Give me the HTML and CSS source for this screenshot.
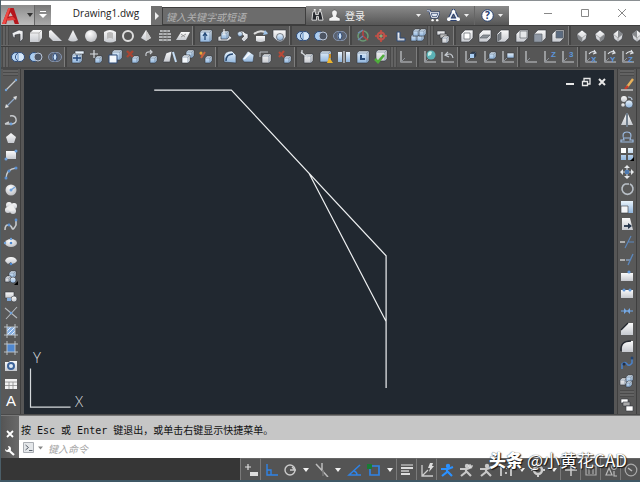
FILE: index.html
```html
<!DOCTYPE html>
<html lang="zh-CN">
<head>
    <meta charset="UTF-8">
    <meta name="viewport" content="width=device-width, initial-scale=1.0">
    <title>Drawing1.dwg</title>
    <link rel="stylesheet" href="styles.css">
</head>
<body>
    <svg class="defs" width="0" height="0" aria-hidden="true">
        <linearGradient id="light" x1="0" y1="0" x2="0" y2="1">
            <stop offset="0" stop-color="#fafafa"/><stop offset="1" stop-color="#c6c9cf"/>
        </linearGradient>
        <linearGradient id="blue" x1="0" y1="0" x2="0" y2="1">
            <stop offset="0" stop-color="#eaf4fc"/><stop offset="1" stop-color="#8fb4dc"/>
        </linearGradient>
        <radialGradient id="ball" cx="0.4" cy="0.3" r="0.8">
            <stop offset="0" stop-color="#fff"/><stop offset="1" stop-color="#b5b7bc"/>
        </radialGradient>
    </svg>

    <div class="app">
        <header class="titlebar">
            <button class="app-menu" aria-label="应用程序菜单">
                <svg class="logo" viewBox="0 0 16 16">
                    <path d="M0 16 6 1h5l5 15h-4l-1.500-4.500H5L4 16z" fill="#b5161c"/>
                    <path d="M6 1h2L3 16H0z" fill="#ee4a45"/>
                    <path d="M4 11l6-2 3 3-8 1z" fill="#e2403c"/>
                    <path d="M8 5 6 9l4-.5z" fill="#c9bcbc"/>
                </svg>
                <svg class="caret" viewBox="0 0 6 4"><path d="M0 0h6L3 4z" fill="#333"/></svg>
            </button>
            <button class="quick" aria-label="自定义快速访问工具栏">
                <svg viewBox="0 0 8 8"><path d="M1 0h6v1H1zM0 3h8L4 7z" fill="#fff"/></svg>
            </button>
            <h1 class="doc-name">Drawing1.dwg</h1>
            <button class="expand" aria-label="展开">
                <svg viewBox="0 0 4 8"><path d="M0 0l4 4-4 4z" fill="#eee"/></svg>
            </button>
            <input class="search" type="text" placeholder="键入关键字或短语" aria-label="搜索">
            <div class="infobar">
                <button aria-label="查找">
                    <svg viewBox="0 0 14 14"><path d="M2 3h3v3h3V3h3l2 9H8V8H6v4H1z" fill="#25282d" stroke="#e4e4e4"/><path d="M3 1h2M9 1h2" stroke="#eee" stroke-width="2"/></svg>
                </button>
                <button class="login">
                    <svg viewBox="0 0 14 14"><path d="M4 4a3 3 0 0 1 6 0c0 2-1 3-1 4l4 2v3H1v-3l4-2C5 7 4 6 4 4z" fill="#f4f4f4" stroke="#444" stroke-width=".6"/></svg>
                    <span>登录</span>
                    <svg class="small-caret" viewBox="0 0 5 3"><path d="M0 0h5L2.500 3z" fill="#eee"/></svg>
                </button>
                <button aria-label="应用商店">
                    <svg viewBox="0 0 14 14"><path d="M0 2h3l2 7h6l2-5H4" fill="#dfe6f2" stroke="#273c68" stroke-width="2.400"/><path d="M0 2h3l2 7h6l2-5H4" fill="none" stroke="#fff"/><circle cx="6" cy="12" r="1.300" fill="#fff"/><circle cx="11" cy="12" r="1.300" fill="#fff"/></svg>
                </button>
                <button class="with-caret" aria-label="保持连接">
                    <svg viewBox="0 0 14 14"><path d="M7 2 2.500 11h9z" fill="none" stroke="#2c4170" stroke-width="4"/><path d="M7 2 2.500 11h9z" fill="none" stroke="#e8edf5" stroke-width="1.800"/><circle cx="7" cy="3" r="2" fill="#fff"/><circle cx="2" cy="11" r="2" fill="#fff"/><circle cx="12" cy="11" r="2" fill="#fff"/></svg>
                    <svg class="small-caret" viewBox="0 0 5 3"><path d="M0 0h5L2.500 3z" fill="#eee"/></svg>
                </button>
                <button class="with-caret help" aria-label="帮助">
                    <svg viewBox="0 0 14 14"><circle cx="7" cy="7" r="6.200" fill="#fff" stroke="#25406f"/><text x="7" y="11" text-anchor="middle" class="help-mark">?</text></svg>
                    <svg class="small-caret" viewBox="0 0 5 3"><path d="M0 0h5L2.500 3z" fill="#eee"/></svg>
                </button>
            </div>
            <div class="window-buttons">
                <button aria-label="最小化"><svg viewBox="0 0 10 10"><path d="M1 5.500h8" stroke="#888"/></svg></button>
                <button aria-label="最大化"><svg viewBox="0 0 10 10"><path d="M1.500 1.500h7v7h-7z" fill="none" stroke="#888"/></svg></button>
                <button aria-label="关闭"><svg viewBox="0 0 10 10"><path d="M1 1l8 8M9 1L1 9" stroke="#888"/></svg></button>
            </div>
        </header>

        <div class="toolbar modeling" data-tools="grip polysolid box wedge cone sphere cylinder torus pyramid helix plane | extrude presspull sweep revolve loft | union subtract intersect | move3d rotate3d align3d array3d grip cascade | cubeTop cubeBottom cubeLeft cubeRight cubeFront cubeBack | isoSW isoSE isoNE isoNW"></div>
        <div class="toolbar solids" data-tools="grip union subtract intersect | extrudeFace moveFace offsetFace deleteFace rotateFace taperFace copyFace colorFace | filletEdge chamferEdge copyEdge colorEdge | imprint clean separate shell check grip ucs | ucsWorld ucsPrev | ucsFace ucsObject ucsView | ucsOrigin ucsZ ucs3 | rotX rotY rotZ"></div>

        <main class="workspace">
            <div class="toolbar vertical" data-tools="grip line xline pline polygon rect arc circle cloud spline ellipse ellipseArc insert block point hatch gradient region table mtext"></div>
            <section class="canvas">
                <svg class="drawing" viewBox="0 0 589 346" preserveAspectRatio="xMinYMin meet">
                    <path d="M130 20h77l154.500 165.500v132M284.500 103l77 148" fill="none" stroke="#eef0f1" stroke-width="1.200"/>
                    <path d="M6.500 298v38.500h40" fill="none" stroke="#d5d9dc" stroke-width="1.200"/>
                    <text x="13" y="293" text-anchor="middle">Y</text>
                    <text x="55" y="336" text-anchor="middle">X</text>
                </svg>
                <div class="doc-buttons">
                    <button aria-label="最小化图形"><svg viewBox="0 0 10 10"><path d="M1 7h8" stroke="#e8e8e8" stroke-width="2"/></svg></button>
                    <button aria-label="还原图形"><svg viewBox="0 0 10 10"><path d="M3 4V1.500h6V7H7M1.500 4.500h5v4h-5z" fill="none" stroke="#e8e8e8" stroke-width="1.300"/></svg></button>
                    <button aria-label="关闭图形"><svg viewBox="0 0 10 10"><path d="M2 2l6 6M8 2L2 8" stroke="#e8e8e8" stroke-width="2"/></svg></button>
                </div>
            </section>
            <div class="toolbar vertical right" data-tools="grip erase copy mirror offset array move rotate scale stretch trim extend breakPoint break join chamfer fillet blend explode grip order"></div>
        </main>

        <section class="command">
            <div class="command-side">
                <button aria-label="关闭命令行"><svg viewBox="0 0 10 10"><path d="M2 2l6 6M8 2L2 8" stroke="#fff" stroke-width="1.800"/></svg></button>
                <button aria-label="自定义"><svg viewBox="0 0 10 10"><path d="M3 3.500l6 5.500" stroke="#fff" stroke-width="2.200"/><path d="M3 0a3 3 0 1 1-3 3l2 1.500L4 3z" fill="#fff"/></svg></button>
            </div>
            <div class="command-body">
                <p class="history">按 Esc 或 Enter 键退出，或单击右键显示快捷菜单。</p>
                <div class="prompt">
                    <button aria-label="近期使用的命令">
                        <svg viewBox="0 0 20 12"><path d="M.5.500h10v10H.5z" fill="#e4e7ea" stroke="#a9adb3"/><path d="M2.500 3l3 2.500-3 2.500M6 8.500h3.500" fill="none" stroke="#59616c"/><path d="M15 4.500h5l-2.500 3z" fill="#888"/></svg>
                    </button>
                    <input type="text" placeholder="键入命令" aria-label="命令">
                </div>
            </div>
        </section>

        <footer class="statusbar" data-tools="snap ortho polar more iso more otrack osnap more lineweight ducs anno annoAuto annoScale scaleList more gear more plus monitor isolate clock"></footer>
        <div class="watermark"><b>头条</b>@小黄花CAD</div>
    </div>
    <script src="script.js"></script>
</body>
</html>
```
FILE: styles.css
```css
* { box-sizing: border-box; }
body { margin: 0; font-family: "Noto Sans", "Noto Sans CJK SC", sans-serif; font-size: 11px; background: #555; overflow: hidden; }
button { display: flex; align-items: center; justify-content: center; padding: 0; border: 0; background: none; color: inherit; font: inherit; }
svg { display: block; flex: none; }
.defs { position: absolute; }
.app { position: relative; display: flex; flex-direction: column; height: 100vh; border-left: 1px solid #4b5e68; border-bottom: 2px solid #3f5866; overflow: hidden; }

/* title bar */
.titlebar { display: flex; height: 25px; flex: none; background: #fff; border-top: 1px solid #8a8f92; }
.app-menu { width: 34px; margin-top: 4px; gap: 8px; background: linear-gradient(#8c8c8c, #bdbdbd); border-right: 1px solid #666; }
.logo { width: 17px; height: 17px; }
.caret { width: 6px; height: 4px; }
.quick { width: 16px; margin-top: 4px; background: linear-gradient(#777, #aaa); }
.quick svg { width: 8px; height: 8px; }
.doc-name { width: 100px; margin: 0; padding-left: 10px; text-align: center; font: 10px/24px "Open Sans", sans-serif; color: #222; }
.expand { width: 11px; margin-top: 5px; background: #707070; }
.expand svg { width: 4px; height: 8px; }
.search { flex: 1; min-width: 0; margin-top: 6px; padding: 0 3px; border: 1px solid #3e3e3e; background: #6c6c6c; font: italic 10px "Noto Sans CJK SC", sans-serif; color: #ddd; }
.search::placeholder { color: #b2b2b2; opacity: 1; }
.infobar { display: flex; width: 203px; margin-top: 5px; padding-left: 2px; background: linear-gradient(#8a8a8a, #565656); color: #f0f0f0; }
.infobar button { width: 18px; }
.infobar svg { width: 13px; height: 13px; }
.infobar .small-caret { width: 5px; height: 3px; }
.infobar .login { width: 98px; gap: 4px; padding: 0 3px 0 2px; justify-content: flex-start; font-size: 10px; }
.infobar .login .small-caret { margin-left: auto; }
.infobar .with-caret { width: 32px; gap: 4px; }
.infobar .help { width: 35px; border-left: 1px solid #666; }
.help-mark { font: bold 11px "Open Sans", sans-serif; fill: #1d3a70; }
.window-buttons { display: flex; width: 131px; padding-left: 21px; }
.window-buttons button { width: 37px; }
.window-buttons svg { width: 10px; height: 10px; }

/* toolbars */
.toolbar { display: flex; height: 21px; flex: none; padding-left: 1px; background: #565656; border-top: 1px solid #3d3d3d; border-bottom: 1px solid #666; }
.toolbar button { flex: 1 1 18px; min-width: 0; }
.toolbar svg { width: 14px; height: 14px; overflow: visible; }
.toolbar .sep { width: 5px; border-left: 1px solid #7d7d7d; border-right: 2px solid #565656; background: #454545; background-clip: content-box; }
.grip { width: 7px; background: repeating-linear-gradient(90deg, #4a4a4a 0 1px, #626262 1px 3px); }
.modeling { margin-right: -6px; }
.solids { height: 23px; padding-right: 3px; border-bottom: 2px solid #484848; }
.tiny { font: bold 8px "Liberation Sans", sans-serif; fill: #5d96dc; }
.letter { font: 15px "Liberation Sans", sans-serif; fill: #fff; }

/* workspace */
.workspace { display: flex; flex: 1; min-height: 0; background: #565656; border-bottom: 1px solid #4a4a4a; }
.vertical { flex-direction: column; width: 20px; height: auto; padding: 0 0 4px; border: 0; border-right: 1px solid #3f3f3f; background: #595959; }
.vertical .grip { width: auto; height: 7px; margin: 0 2px; background: repeating-linear-gradient(#4a4a4a 0 1px, #626262 1px 3px); }
.vertical button { flex: 1 1 17px; min-height: 0; }
.right { border-left: 1px solid #3f3f3f; margin-right: 3px; padding: 0; width: 20px; }
.canvas { position: relative; flex: 1; min-width: 0; margin: 1px 3px 0; background: #212830; overflow: hidden; }
.drawing { width: 100%; }
.drawing text { font: 300 15px "Open Sans", sans-serif; fill: #d5d9dc; }
.doc-buttons { position: absolute; top: 6px; right: 4px; display: flex; }
.doc-buttons button { width: 16px; height: 12px; }
.doc-buttons svg { width: 10px; height: 10px; }

/* command line */
.command { display: flex; flex: none; border-top: 1px solid #777; }
.command-side { display: flex; flex-direction: column; justify-content: space-between; width: 18px; padding: 12px 0 2px; background: linear-gradient(90deg, #555, #696969); }
.command-side button { height: 11px; }
.command-side svg { width: 10px; height: 10px; }
.command-body { flex: 1; }
.history { margin: 0; padding: 7px 2px 1px; background: #c6c6c6; color: #111; font: 10px/16px "DejaVu Sans Mono", "Noto Sans CJK SC", monospace; }
.prompt { display: flex; align-items: center; height: 18px; padding: 0 4px 2px; background: #fff; }
.prompt svg { width: 20px; height: 12px; }
.prompt input { flex: 1; border: 0; padding: 0 5px; outline: 0; background: none; font: italic 10px "Noto Sans CJK SC", sans-serif; }
.prompt input::placeholder { color: #a4a4a4; opacity: 1; }

/* status bar */
.statusbar { display: flex; justify-content: flex-end; height: 22px; flex: none; background: #363636; }
.statusbar button { width: 20px; background: #545454; border-top: 1px solid #666; }
.statusbar .more { width: 12px; }
.statusbar .edge { border-left: 1px solid #7a7a7a; }
.statusbar svg { width: 14px; height: 14px; }
.watermark { position: absolute; right: 13px; bottom: 9px; color: #fff; font: 17px/22px "Noto Sans CJK SC", sans-serif; text-shadow: 1px 1px 1px #111, 0 0 1px #222; white-space: nowrap; }
.watermark b { margin-right: 4px; font-weight: 900; }
```
FILE: script.js
```js
// small helpers for the shapes that many icons share
const p = (d, fill = 'url(#light)', extra = '') => `<path d="${d}" fill="${fill}" ${extra}/>`;
const s = (d, color = '#dfe3e8', w = 1.2) => `<path d="${d}" fill="none" stroke="${color}" stroke-width="${w}"/>`;
const c = (x, y, r, fill = 'url(#light)', extra = '') => `<circle cx="${x}" cy="${y}" r="${r}" fill="${fill}" ${extra}/>`;
const t = (x, y, text, cls = 'tiny') => `<text x="${x}" y="${y}" class="${cls}">${text}</text>`;
const edge = 'stroke="#34383e" stroke-width="0.6"';
const navy = 'stroke="#2d4a78" stroke-width="1"';
const cube = (x, y, n, fill = 'url(#blue)') =>
    p(`M${x} ${y + 2}l2-2h${n}v${n}l-2 2h-${n}z`, fill, edge) + s(`M${x} ${y + 2}h${n}v${n}M${x + n} ${y + 2}l2-2`, '#5d6e86', 0.6);
const axes = s('M2 1v11h11', '#c5c8cc') + s('M2 12l4-4', '#8b9098', 1);
const view = (face, fill) => p('M1 5l4-4h8v8l-4 4H1z', 'url(#light)', edge) + p(face, fill || '#fff', 'stroke="#60656b" stroke-width="0.7"');
const iso = shade => p('M7 1l5 4-1 5-4 3-4-3-1-5z', 'url(#light)', edge) + p(shade, '#85888c') + s('M2 5l5 4 5-4M7 9v4', '#888', 0.6);
const man = color => c(8, 3, 2.2, color) + s('M1 6h5l2 0 5-2M7 6v3l-5 4M7 8l5 5', color, 2.2);

const icons = {
    polysolid: p('M1 4l7-3 4 1v8l-3 3V5L4 6v3L2 8z', 'url(#light)', edge),
    box: p('M1 4l3-3h9v8l-3 4H1z', 'url(#light)') + s('M1 4h9v9M10 4l3-3', '#aaa', 0.8),
    wedge: p('M1 2l2-1 11 11H5L1 8z'),
    cone: p('M7 1l5 10q-5 3-10 0z'),
    sphere: c(7, 7, 6, 'url(#ball)'),
    cylinder: p('M1 3q6-4 12 0v9q-6 3-12 0z') + p('M4 4q3-2 6 0v6q-3-2-6 0z', '#b9b9b9'),
    torus: c(7, 7, 5, 'none', 'stroke="#ddd" stroke-width="2"'),
    pyramid: p('M7 1l5 8-5 3-5-3z') + p('M7 1v11l5-3z', '#cacaca'),
    helix: s('M2 2h10M1 5h12M1 8h12M1 11h12', '#d0d2d5', 1.7) + s('M5 1v12M9 1v12', '#777', 0.8),
    plane: p('M5 3h9l-4 8H0z') + s('M5 8l5-3M5 5l4 3', '#888', 0.8),
    extrude: cube(1, 1, 10) + s('M6 11V5M4 7l2-3 2 3', '#244978', 1.3),
    presspull: p('M0 8l4-2h7l3 3-4 3H0z', 'url(#light)', edge) + cube(3, 2, 6) + s('M6 6V0', '#eee'),
    sweep: p('M1 4q5-4 8 0l3 1v4l-4 4-3-3 3-3-2-1-3 2z', 'url(#light)', edge) + c(4, 5, 2.5, 'url(#blue)', edge),
    revolve: p('M2 7h9v5q-5 2-9 0z', 'url(#light)') + s('M0 5q6-5 13-1', '#dcdcdc', 2) + p('M11 1l3 4-5 1z', '#9ec2e6'),
    loft: p('M0 1h13v7q-3 5-6 5t-7-5z', 'url(#light)', edge) + c(7, 8, 3.5, 'url(#blue)', edge),
    union: c(5, 7, 4.5, '#b9d6f3', navy) + c(9, 7, 4.5, '#d6e7f8', navy) + s('M7 4v6', '#6f9ccf'),
    subtract: c(5, 7, 4.5, '#aacdf0', navy) + c(9, 7, 4, '#4d5563', 'stroke="#b9c6da"'),
    intersect: c(5, 7, 4.5, '#5a6270', 'stroke="#8494b0"') + c(9, 7, 4.5, '#5a6270', 'stroke="#8494b0"') + p('M7 3q4 4 0 8-4-4 0-8z', '#c9e0f7', navy),
    move3d: c(7, 7, 5, 'none', 'stroke="#6b9b74" stroke-width="1.5"') + s('M7 1v6l5 4', '#b84343', 1.6) + s('M7 7l-5 4M2 4l5-3', '#6d87b4'),
    rotate3d: s('M1 7h12M7 1v12', '#cf4b3d', 1.5) + c(7, 7, 3.5, 'none', 'stroke="#c0524a" stroke-width="2"') + c(7, 7, 1.5, '#7dad7e'),
    align3d: p('M4 3h3v6h5v3H4z', 'url(#light)', navy),
    array3d: cube(0, 5, 5) + cube(6, 5, 5) + cube(2, 0, 5) + cube(8, 0, 5),
    cascade: p('M1 2h8v4H1z', 'url(#light)', edge) + p('M4 5h7v4H4z', '#bbb', edge) + cube(6, 7, 5, 'url(#light)'),
    cubeTop: view('M4 4h6v6H4z'),
    cubeBottom: view('M2 9h7l3-3H5z', '#8c9299'),
    cubeLeft: view('M2 6l3-3v7l-3 2z', '#777c82'),
    cubeRight: view('M5 2h7v7H5z', '#e6e8ea'),
    cubeFront: view('M1 5h8v8H1z', '#8f98a5'),
    cubeBack: view('M5 2h7v7H5z', '#5b6b80'),
    isoSW: iso('M2 5l5 4v4l-4-3z'),
    isoSE: iso('M7 9l5-4-1 5-4 3z'),
    isoNE: iso('M7 1l5 4-5 4z'),
    isoNW: iso('M7 1L2 5l5 4z'),

    extrudeFace: cube(1, 3, 8) + p('M4 1h9v3H4z', '#eaf4fd', edge) + s('M2 8h8M6 5v6', '#24477b', 1.4),
    moveFace: s('M5 0v8M1 4h8', '#d9dde1', 1.2) + cube(6, 6, 5),
    offsetFace: cube(4, 0, 8) + p('M1 5h8v8H1z', '#f4f8fc', navy),
    deleteFace: s('M1 1l6 6M7 1L1 7', '#a84533', 2.4) + cube(6, 6, 5),
    rotateFace: s('M2 6q-1-5 5-4M6 0l2 2-2 2', '#c9cdd2', 1.2) + cube(6, 6, 5),
    taperFace: p('M0 12L3 3l6-2-2 11z', 'url(#light)', edge) + s('M10 2l3 10', '#c4dcf4', 2),
    copyFace: cube(5, 0, 6) + cube(1, 5, 6, '#f4f8fc'),
    colorFace: s('M1 3l3 3M6 2L2 8', '#c76140', 2) + c(2, 3, 1.5, '#e4ac38') + cube(6, 6, 5),
    filletEdge: p('M1 12V6q1-5 8-5l4 4v8z', 'url(#blue)', edge) + s('M3 11q0-7 7-7', '#294a72', 1.5),
    chamferEdge: p('M1 9l6-8 6 4-1 7H3z', 'url(#blue)', edge) + s('M3 9l6-6', '#f8fbff', 1.7),
    copyEdge: s('M1 2h8M1 2v5', '#b5bac0', 1) + cube(3, 4, 7, 'url(#light)'),
    colorEdge: s('M1 2l5 5M6 1L1 7', '#b74a38', 2) + cube(6, 6, 5),
    imprint: cube(3, 4, 7, 'url(#light)') + s('M0 2l7 6M1 0v4', '#d4d8dd'),
    clean: cube(1, 1, 9) + p('M10 7l4 6H8z', '#edb52d') + s('M11 4v4', '#c98b20', 2),
    separate: p('M1 2h4v10H1zM9 2h4v10H9z', 'url(#blue)') + s('M7 1v12', '#d5dae0'),
    shell: cube(1, 1, 10) + p('M4 5h5v5H4z', '#294b78') + p('M6 5h3v3H6z', '#b9d6f3'),
    check: cube(2, 0, 9, 'url(#light)') + s('M1 9l3 3 6-7', '#4fae3b', 2.6),
    ucs: axes,
    ucsWorld: axes + c(8, 5, 4.5, '#5bb2b6') + p('M5 3q2-3 4-1l-1 3-3 1z', '#c5ece6'),
    ucsPrev: s('M1 2v10h12', '#c5c8cc') + s('M5 5q6-3 7 3M7 2L4 5l4 2', '#c3c8ce'),
    ucsFace: axes + cube(6, 2, 4, '#293a50') + p('M6 4h4v4H6z', '#a9cdf2'),
    ucsObject: axes + cube(6, 2, 5),
    ucsView: axes + p('M6 3h7v5H6z', 'url(#blue)', edge),
    ucsOrigin: axes,
    ucsZ: axes + t(8, 7, 'Z'),
    ucs3: axes + t(8, 7, '3'),
    rotX: axes + s('M5 4q3-4 7-1M10 0l2 3-3 1') + t(7, 12, 'X'),
    rotY: axes + s('M5 4q3-4 7-1M10 0l2 3-3 1') + t(7, 12, 'Y'),
    rotZ: axes + s('M5 4q3-4 7-1M10 0l2 3-3 1') + t(7, 12, 'Z'),

    line: s('M2 12L12 2', '#c7cacd') + c(2, 12, 1.2, '#6fa2dc') + c(12, 2, 1.2, '#6fa2dc'),
    xline: s('M2 12L12 2', '#8fa9c8') + p('M1 13l1-4 3 3zM13 1l-1 4-3-3z', '#ddd'),
    pline: s('M1 11h7q5-1 4-5T6 3M1 11l4-2', '#c7cacd', 1.4) + c(7, 11, 1.4, '#6fa2dc'),
    polygon: p('M7 2l5 4-2 6H4L2 6z'),
    rect: p('M2 3h10v8H2z') + c(2, 11, 1.5, '#6fa2dc') + c(12, 3, 1.5, '#6fa2dc'),
    arc: s('M2 13Q2 3 12 2', '#c7cacd', 1.4) + c(2, 12, 1.5, '#5c92d4') + c(5, 5, 1.5, '#5c92d4') + c(12, 2, 1.5, '#5c92d4'),
    circle: c(7, 7, 5.5, 'url(#ball)') + c(7, 7, 1.5, '#6fa2dc') + s('M7 7l4-3', '#6fa2dc'),
    cloud: c(5, 4, 3) + c(10, 5, 3) + c(4, 9, 3) + c(9, 10, 3) + c(7, 7, 3, '#eee'),
    spline: s('M1 12q0-5 3-5t4 3 4-3V2', '#c7cacd', 1.6) + c(5, 7, 1.4, '#5c92d4') + c(12, 2, 1.4, '#5c92d4'),
    ellipse: '<ellipse cx="7" cy="7" rx="6" ry="4" fill="url(#ball)"/>' + c(7, 7, 1.3, '#4c87cf') + c(1, 7, 1.2, '#6fa2dc') + c(7, 3, 1.2, '#6fa2dc'),
    ellipseArc: p('M1 7q1-4 6-4t6 4q-2 3-5 3l-1-2-3 2z') + c(7, 10, 1.3, '#4c87cf'),
    insert: cube(5, 0, 5) + cube(1, 5, 4, 'url(#light)') + c(9, 9, 3, 'url(#blue)', edge) + p('M14 10v4h-4z', '#000'),
    block: p('M1 3h9v6H1z', 'url(#light)', edge) + c(10, 10, 3, 'url(#light)', edge) + p('M3 9h4v3H3z', '#7fa8d8'),
    point: s('M1 2l12 10M13 1L2 13', '#b5babf', 1.1) + c(7, 7, 1.3, '#6fa2dc'),
    hatch: p('M3 3h8v8H3z', '#84aee2') + s('M3 7l4-4M3 11l8-8M7 11l4-4', '#e4effb', 1) + s('M3 0v14M11 0v14M0 3h14M0 11h14', '#c2c8ce', 0.9),
    gradient: p('M3 3h8v8H3z', '#4f87cf') + s('M3 0v14M11 0v14M0 3h14M0 11h14', '#c2c8ce', 0.9),
    region: p('M1 3h4l1-1h7v10H1z') + c(7, 7, 3, '#dce9f6', 'stroke="#3c6298" stroke-width="2"'),
    table: p('M1 2h12v10H1z', '#f1f1f1') + s('M1 5h12M1 8.5h12M5 5v7M9 5v7', '#8c8c8c', 0.8),
    mtext: t(2, 12, 'A', 'letter'),

    erase: s('M13 1L7 9', '#e8b25b', 2.4) + s('M8 8l-3 3', '#c83d2c', 2.4) + s('M1 12h12', '#ddd'),
    copy: c(4, 4, 3) + c(9, 9, 4, 'url(#blue)', edge) + c(3, 10, 1.8) + s('M8 2q4 0 4 3', '#b9c9dc'),
    mirror: p('M6 1v11H1zM8 1v11h5z') + s('M7 0v14', '#98b9dc', 0.8),
    offset: s('M1 12h12v-2h-3q3-8-3-8t-3 8H1z', '#9bb9df', 1.2) + s('M4 8h6', '#9bb9df', 1),
    array: p('M1 1h5v5H1z', '#fff') + p('M8 1h5v5H8zM1 8h5v5H1zM8 8h5v5H8z', 'url(#blue)') + p('M14 10v4h-4z', '#000'),
    move: p('M7 0l3 3H4zM14 7l-3-3v6zM7 14l3-3H4zM0 7l3-3v6z', '#e6e8ea') + s('M7 3v8M3 7h8', '#c3cddb', 1.2) + p('M5 5h4v4H5z', '#4d79b0'),
    rotate: s('M5 2a5.5 5.5 0 1 0 5 0M5 2h4', '#b9c0c8', 1.6),
    scale: p('M1 1h12v12H1z', 'url(#blue)') + p('M1 6h7v7H1z', '#f3f5f8', edge),
    stretch: p('M2 1h8l3 12H2z') + s('M4 9h5', '#25354a', 1.8) + p('M8 6l4 3-4 3z', '#25354a'),
    trim: s('M0 7h5', '#ddd', 1.3) + s('M11 1L5 13M8 7h6', '#5b88bf', 1.1),
    extend: s('M0 8h5', '#ddd', 1.3) + s('M6 8h4', '#8faed3') + s('M13 2L8 13', '#5b88bf', 1.3),
    breakPoint: p('M1 4h12v8H1z') + c(9, 3, 1.6, '#6399da'),
    break: p('M1 3h12v8H1z') + c(4, 3, 1.5, '#6399da') + c(10, 3, 1.5, '#6399da'),
    join: s('M1 7h12', '#6ba0e0', 1.1) + p('M4 4l3 3-3 3zM10 4L7 7l3 3z', '#76a8e2'),
    chamfer: p('M1 13V8l7-7h5v12z') + s('M1 8l7-7', '#20252c', 1.2),
    fillet: p('M2 13V9q0-7 8-7h3v11z') + s('M1 12q-1-10 10-10', '#252a31', 1.4),
    blend: s('M2 13V8q3-3 5 0t5-1V2', '#4a82cc', 1.5) + c(4, 8, 1.5, '#1e2f4b') + c(12, 2, 1.5, '#24436f'),
    explode: cube(0, 4, 5, 'url(#light)') + cube(6, 1, 5) + cube(6, 7, 4),
    order: p('M1 1h7v4H1z', '#fff', edge) + p('M3 4h7v4H3z', '#aaa', edge) + p('M6 8h7v5H6z', '#fff', edge),

    snap: s('M1 4h6M4 1v6', '#ddd', 1.2) + p('M6 9h8v4H6z', '#ddd'),
    ortho: s('M3 1v11h11M3 7h4v5', '#2f83e6', 1.4),
    polar: c(7, 7, 5, 'none', 'stroke="#ccc" stroke-width="1.4"') + s('M7 7h6M9 4l3 3', '#ccc', 1.4),
    iso: s('M1 1l12 13M7 0v7', '#bbb', 1.5) + s('M8 7v6', '#777', 1.5),
    otrack: s('M13 2L2 12h12M7 8q3 1 3 4', '#2f83e6', 1.5),
    osnap: s('M3 3h9v9H3z', '#2f83e6', 1.7) + p('M0 1h5v5H0z', '#197c35'),
    lineweight: s('M1 2h12', '#ccc', 1.2) + s('M1 5h12M1 11h9', '#ddd', 2) + s('M1 8h8', '#ccc', 1.5),
    ducs: s('M2 2v11h11M2 13l6-6', '#ccc', 1.3) + p('M10 0l3 0-1 3h2l-5 6 1-4H8z', '#ddd'),
    anno: man('#2b91ff'),
    annoAuto: man('#c8c8c8') + s('M11 1v4M9 3h5', '#eee', 1),
    annoScale: man('#c8c8c8'),
    scaleList: s('M2 2v11M7 5v1M7 9v2M12 2v11', '#d4d4d4', 1.7),
    gear: c(7, 7, 4, 'none', 'stroke="#ccc" stroke-width="2.5"') + s('M7 0v3M7 11v3M0 7h3M11 7h3', '#ccc', 2),
    plus: s('M7 1v12M1 7h12', '#ccc', 1.5),
    monitor: s('M2 3h10v9H2zM5 5v6M9 5v6', '#aaa', 1.2),
    isolate: s('M2 12l3-7 3 7z', '#bbb', 1.2) + c(10, 4, 2.5, 'none', 'stroke="#bbb"') + s('M10 8v5h3', '#bbb'),
    clock: c(7, 7, 5.8, 'none', 'stroke="#aaa" stroke-width="1.2"') + s('M4 5l4 3', '#bbb', 1.5),
    more: p('M4 5h6l-3 4z', '#f2f2f2')
};

const edged = ['snap', 'ortho', 'lineweight', 'ducs', 'anno', 'plus', 'monitor', 'isolate', 'clock'];

document.querySelectorAll('[data-tools]').forEach(bar => {
    bar.innerHTML = bar.dataset.tools.split(' ').map(name => {
        if (name === '|') return '<span class="sep"></span>';
        if (name === 'grip') return '<span class="grip"></span>';
        const cls = name === 'more' ? 'more' : edged.includes(name) ? 'edge' : '';
        return `<button class="${cls}" aria-label="${name}"><svg viewBox="0 0 14 14">${icons[name]}</svg></button>`;
    }).join('');
});
```
